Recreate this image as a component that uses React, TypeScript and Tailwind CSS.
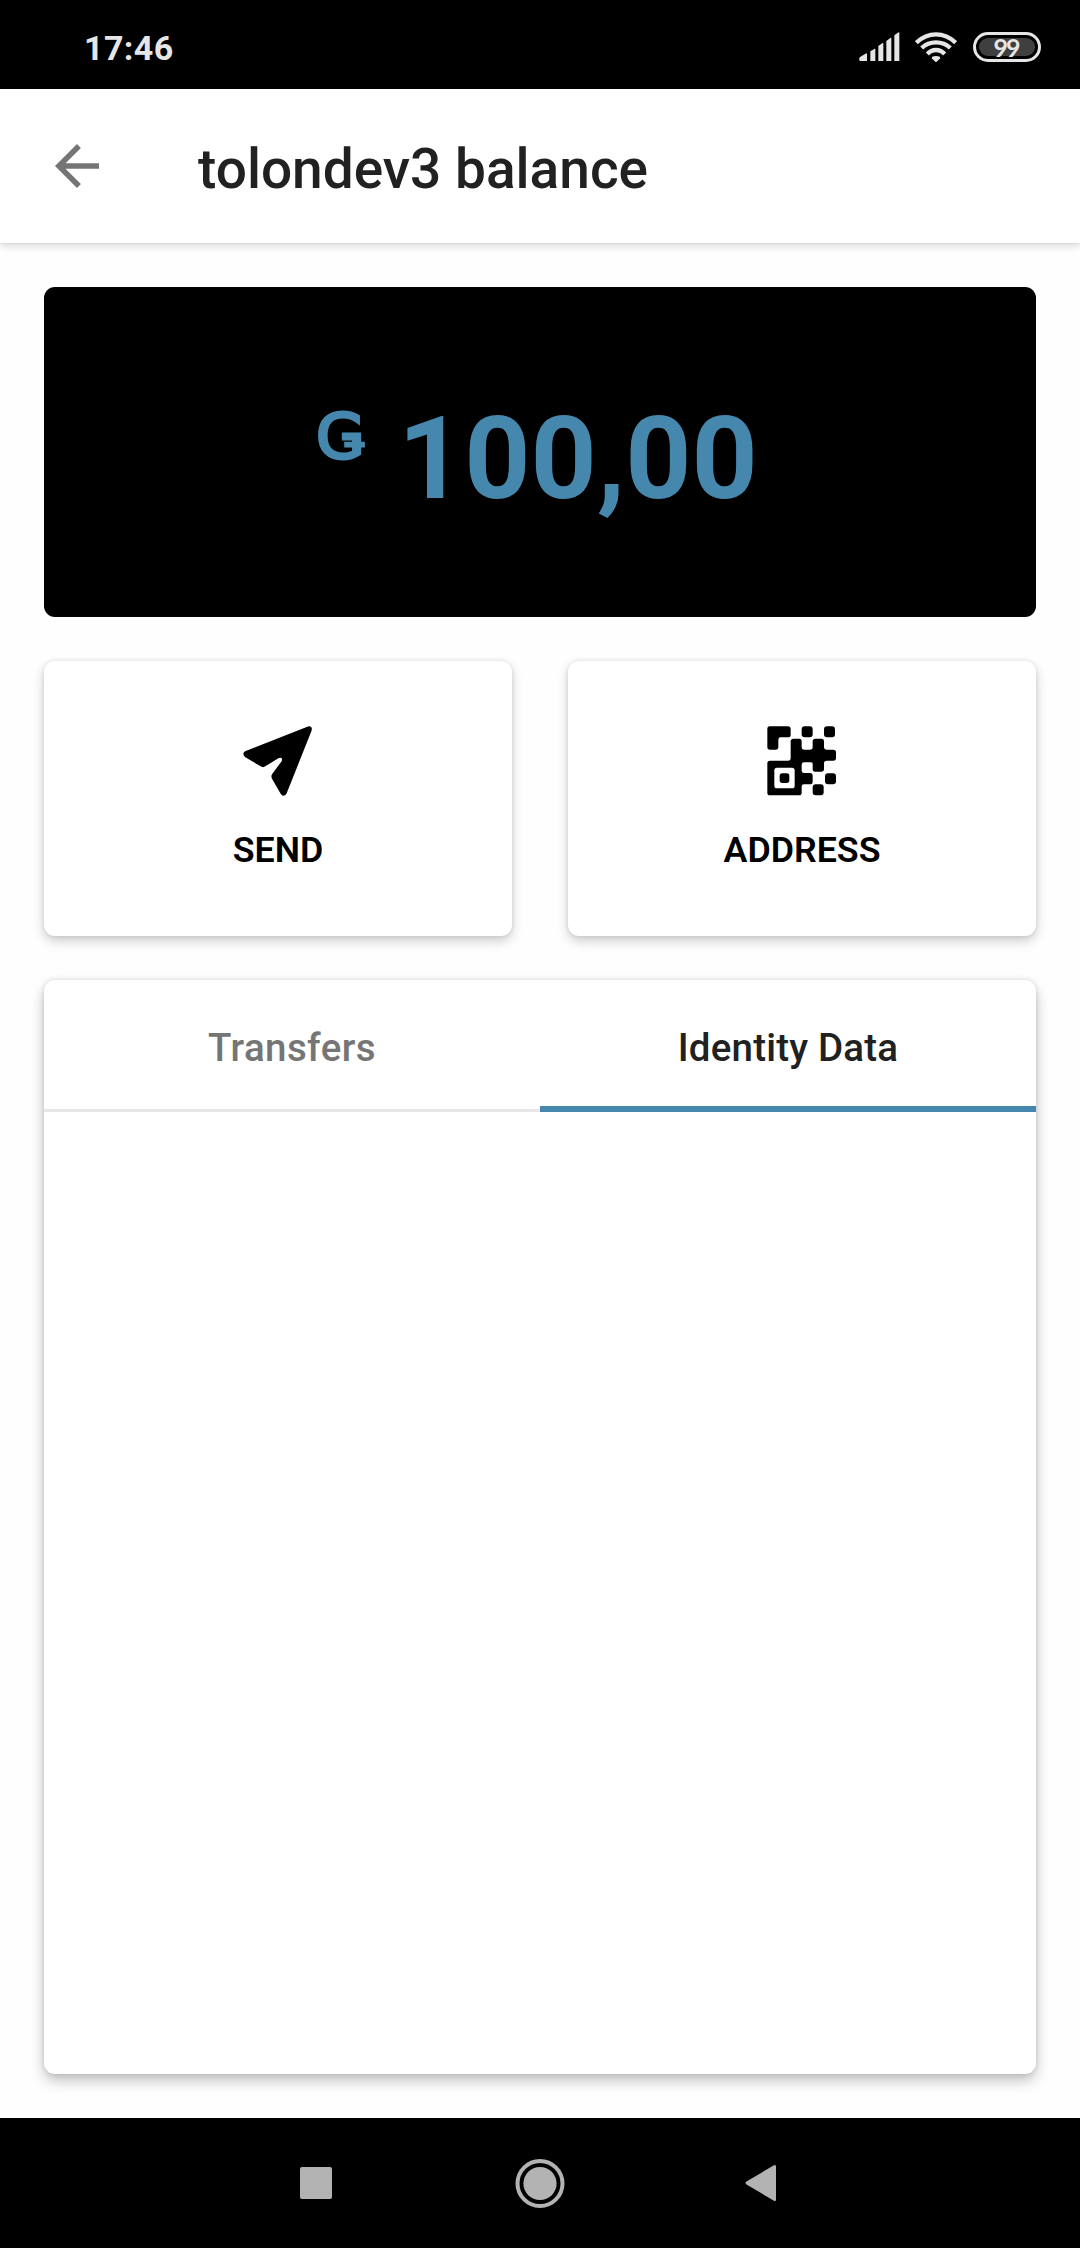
import type { ReactNode } from 'react';

function SignalIcon() {
  return (
    <svg className="h-[30px] w-[42px]" viewBox="0 0 126 90" fill="#e6e6e6">
      <path d="M4 87a3 3 0 0 1-3-3v-5q0-2 2-4l19-11q2-1 2 1v22z" />
      <path d="M34 87V58l13-8q2-1 2 1v36z" />
      <path d="M58 87V42l13-9q2-1 2 1v53z" />
      <path d="M82 87V27l13-10q2-1 2 1v69z" />
      <path d="M106 87V10l13-9q2-1 2 1v85z" />
    </svg>
  );
}

function WifiIcon() {
  return (
    <svg className="h-[30px] w-[42px]" viewBox="0 0 126 90" fill="none" stroke="#e6e6e6" strokeWidth="13">
      <path d="M4 32Q30 7 63 7T122 32" />
      <path d="M20 48Q38 31 63 31T106 48" />
      <path d="M37 66Q48 54 63 54T89 66" />
      <path d="M50 79q0-7 13-7t13 7L63 91z" fill="#e6e6e6" stroke="none" />
    </svg>
  );
}

function Battery() {
  return (
    <div className="flex h-[30px] w-[68px] rounded-full border-[3px] border-[#e6e6e6] p-[3px]">
      <div className="flex flex-1 items-center justify-center rounded-full bg-[#3f3f3f] pr-[2px] font-['Lato'] text-[25px] leading-none font-bold tracking-[-2px] text-[#e6e6e6]">
        99
      </div>
    </div>
  );
}

function SendIcon() {
  return (
    <svg className="h-[70px] w-[70px]" viewBox="0 0 210 210">
      <path d="M2 80Q3 77 8 75L193 2Q200 -1 205 4Q208 8 205 16L131 202Q128 209 122 209Q116 209 113 203L87 158Q83 150 88 143L115 107Q119 101 116 97Q113 93 106 97L67 121Q60 126 53 121L7 94Q-1 88 2 80Z" />
    </svg>
  );
}

function QrIcon() {
  return (
    <svg className="h-[70px] w-[70px]" viewBox="0 0 210 210">
      <path d="M8 1H63Q71 1 71 9V26Q71 34 63 34H41Q34 34 34 41V63Q34 71 26 71H9Q1 71 1 63V9Q1 1 8 1Z" />
      <rect x="104" y="1" width="33" height="33" rx="9" />
      <rect x="171" y="1" width="33" height="33" rx="9" />
      <path d="M80 38H97Q104 38 104 46V64Q104 71 111 71H129Q137 71 137 64V46Q137 38 145 38H163Q171 38 171 46V64Q171 71 178 71H199Q207 71 207 79V96Q207 104 199 104H179Q171 104 171 112V129Q171 137 163 137H145Q137 137 137 129V113Q137 109 130 109H111Q104 109 104 116V134Q104 141 111 141H129Q137 141 137 149V167Q137 175 129 175H111Q104 175 104 182V200Q104 208 96 208H9Q1 208 1 200V112Q1 104 9 104H63Q71 104 71 96V46Q71 38 80 38Z" />
      <rect x="22" y="125" width="61" height="62" rx="8" fill="#fff" />
      <rect x="38" y="142" width="29" height="29" rx="8" />
      <rect x="174" y="142" width="33" height="33" rx="9" />
      <rect x="137" y="175" width="33" height="33" rx="9" />
    </svg>
  );
}

function ActionCard({ icon, label }: { icon: ReactNode; label: string }) {
  return (
    <button className="flex h-[275px] w-[468px] flex-col items-center rounded-[11px] bg-white pt-[65px] shadow-[0_5px_12px_rgba(0,0,0,0.2),0_0_4px_rgba(0,0,0,0.1)]">
      {icon}
      <span className="mt-[33px] text-[35.75px] leading-[42px] font-semibold text-black">{label}</span>
    </button>
  );
}

export default function App() {
  return (
    <div className="flex h-[2248px] w-[1080px] flex-col bg-[#fefefe] font-['Roboto',sans-serif]">
      <div className="flex h-[89px] shrink-0 items-center justify-between bg-black pt-[5px] pr-[39px] pl-[84px]">
        <span className="pt-[2px] text-[34px] leading-none font-bold tracking-[0.4px] text-[#e6e6e6]">17:46</span>
        <div className="flex items-center">
          <SignalIcon />
          <div className="ml-[14px]"><WifiIcon /></div>
          <div className="ml-[16px]"><Battery /></div>
        </div>
      </div>

      <header className="flex h-[154px] shrink-0 items-center bg-white pl-[44px] shadow-[0_3px_8px_rgba(0,0,0,0.14),0_0_3px_rgba(0,0,0,0.1)]">
        <svg className="h-[66px] w-[66px]" viewBox="0 0 24 24" fill="#757575">
          <path d="M20 11H7.83l5.59-5.59L12 4l-8 8 8 8 1.41-1.41L7.83 13H20v-2z" />
        </svg>
        <h1 className="ml-[88px] pt-[6px] text-[55px] leading-[64px] font-medium text-[#212121]">tolondev3 balance</h1>
      </header>

      <main className="flex flex-1 flex-col p-[44px]">
        <section className="flex h-[330px] shrink-0 items-start rounded-[11px] bg-black pt-[102px] pl-[272px] text-[#4687ad]">
          <span className="w-[82px] font-['DejaVu_Sans'] text-[63px] leading-[96px] font-normal [-webkit-text-stroke:3px_#4687ad]">Ǥ</span>
          <span className="text-[115.5px] leading-[139px] font-bold">100,00</span>
        </section>

        <div className="mt-[44px] flex justify-between">
          <ActionCard icon={<SendIcon />} label="SEND" />
          <ActionCard icon={<QrIcon />} label="ADDRESS" />
        </div>

        <section className="mt-[44px] flex-1 rounded-[11px] bg-white shadow-[0_7px_14px_rgba(0,0,0,0.24),0_0_5px_rgba(0,0,0,0.12)]">
          <div className="grid h-[132px] grid-cols-2 text-[38.5px] leading-[46px] font-medium">
            <button className="border-b-[3px] border-[#e6e6e6] pt-[7px] tracking-[0.4px] text-[#757575]">Transfers</button>
            <button className="border-b-[6px] border-[#4687ad] pt-[10px] tracking-[0.2px] text-[#212121]">Identity Data</button>
          </div>
        </section>
      </main>

      <nav className="flex h-[130px] shrink-0 items-center bg-black pl-[300px]">
        <div className="h-[32px] w-[32px] rounded-[2px] bg-[#b3b3b3]" />
        <svg className="ml-[183px] h-[50px] w-[50px]" viewBox="0 0 50 50">
          <circle cx="25" cy="25.5" r="22.5" fill="none" stroke="#b3b3b3" strokeWidth="4" />
          <circle cx="25" cy="25.5" r="16.6" fill="#b3b3b3" />
        </svg>
        <svg className="ml-[179px] h-[38px] w-[34px]" viewBox="0 0 34 38" fill="#b3b3b3">
          <path d="M2.5 17.5 29.5 1.5Q32 0 32 2.5V35.5Q32 38 29.5 36.5L2.5 20.5Q0.5 19 2.5 17.5Z" />
        </svg>
      </nav>
    </div>
  );
}
